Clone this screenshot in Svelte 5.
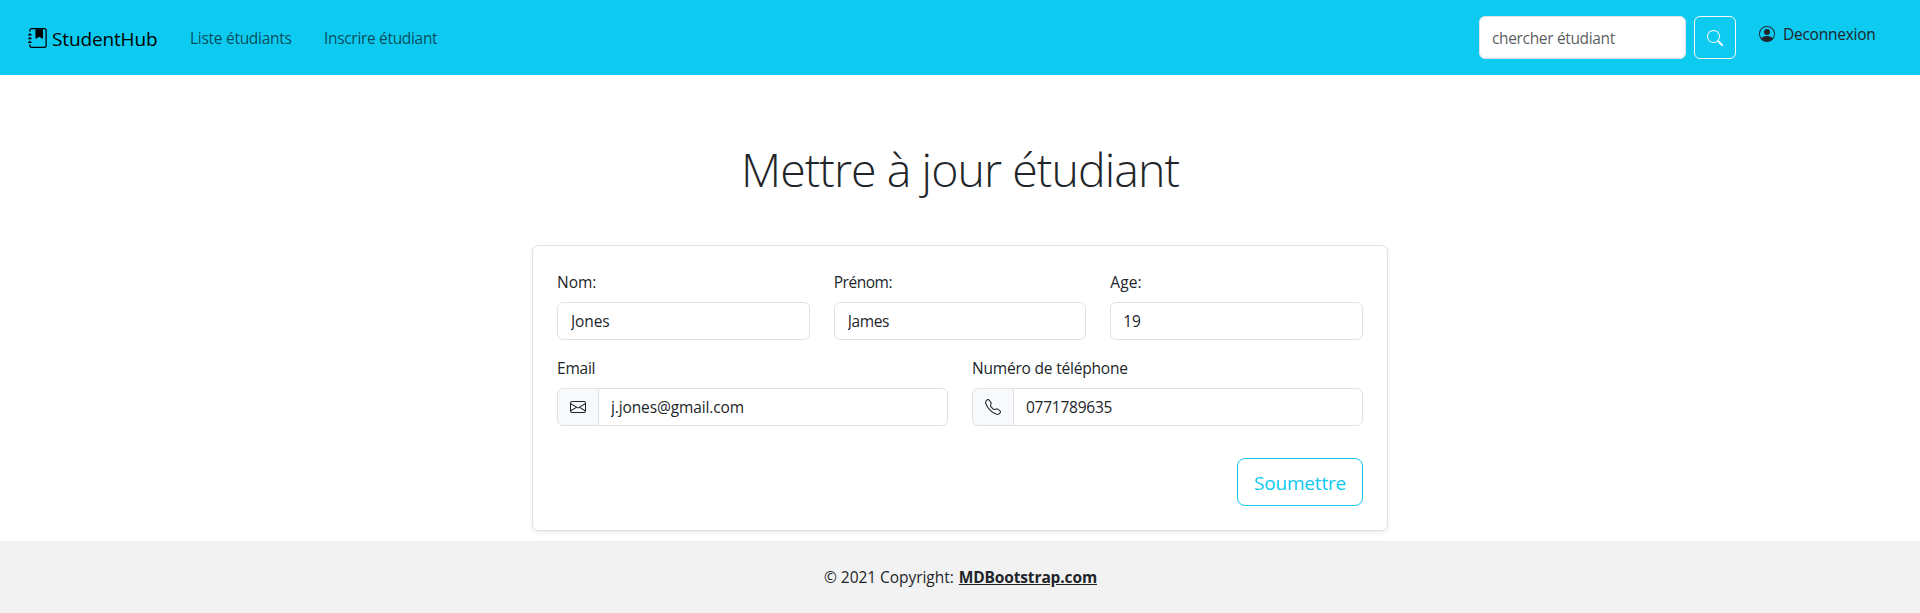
<script>
  const identity = [
    { id: 'nom', label: 'Nom:', value: 'Jones' },
    { id: 'prenom', label: 'Prénom:', value: 'James' },
    { id: 'age', label: 'Age:', value: '19' }
  ];
</script>

<nav class="navbar">
  <a class="brand" href="#home">
    <svg class="book" width="20" height="20" viewBox="0 0 16 16" fill="currentColor">
      <path fill-rule="evenodd" d="M6 8V1h1v6.117L8.743 6.07a.5.5 0 0 1 .514 0L11 7.117V1h1v7a.5.5 0 0 1-.757.429L9 7.083 6.757 8.43A.5.5 0 0 1 6 8z" />
      <path d="M6.3 1h5.4v7L9 6.4 6.3 8z" />
      <path d="M3 0h10a2 2 0 0 1 2 2v12a2 2 0 0 1-2 2H3a2 2 0 0 1-2-2v-1h1v1a1 1 0 0 0 1 1h10a1 1 0 0 0 1-1V2a1 1 0 0 0-1-1H3a1 1 0 0 0-1 1v1H1V2a2 2 0 0 1 2-2z" />
      <path d="M1 5v-.5a.5.5 0 0 1 1 0V5h.5a.5.5 0 0 1 0 1h-2a.5.5 0 0 1 0-1H1zm0 3v-.5a.5.5 0 0 1 1 0V8h.5a.5.5 0 0 1 0 1h-2a.5.5 0 0 1 0-1H1zm0 3v-.5a.5.5 0 0 1 1 0v.5h.5a.5.5 0 0 1 0 1h-2a.5.5 0 0 1 0-1H1z" />
    </svg>
    <span>StudentHub</span>
  </a>
  <a class="link list" href="#liste">Liste étudiants</a>
  <a class="link enrol" href="#inscrire">Inscrire étudiant</a>

  <form class="search">
    <input type="search" placeholder="chercher étudiant" />
    <button type="button" aria-label="chercher">
      <svg width="16" height="16" viewBox="0 0 16 16" fill="currentColor">
        <path d="M11.742 10.344a6.5 6.5 0 1 0-1.397 1.398h-.001c.03.04.062.078.098.115l3.85 3.85a1 1 0 0 0 1.415-1.414l-3.85-3.85a1.007 1.007 0 0 0-.115-.1zM12 6.5a5.5 5.5 0 1 1-11 0 5.5 5.5 0 0 1 11 0z" />
      </svg>
    </button>
  </form>
  <a class="logout" href="#logout">
    <svg width="16" height="16" viewBox="0 0 16 16" fill="currentColor">
      <path d="M11 6a3 3 0 1 1-6 0 3 3 0 0 1 6 0z" />
      <path fill-rule="evenodd" d="M0 8a8 8 0 1 1 16 0A8 8 0 0 1 0 8zm8-7a7 7 0 0 0-5.468 11.37C3.242 11.226 4.805 10 8 10s4.757 1.225 5.468 2.37A7 7 0 0 0 8 1z" />
    </svg>
    <span>Deconnexion</span>
  </a>
</nav>

<main>
  <h1>Mettre à jour étudiant</h1>
  <form class="card">
    <div class="row three">
      {#each identity as field}
        <div class="field {field.id}">
          <label for={field.id}>{field.label}</label>
          <input id={field.id} type="text" value={field.value} />
        </div>
      {/each}
    </div>
    <div class="row two">
      <div class="field email">
        <label for="email">Email</label>
        <div class="group">
          <span class="addon">
            <svg width="16" height="16" viewBox="0 0 16 16" fill="currentColor">
              <path d="M0 4a2 2 0 0 1 2-2h12a2 2 0 0 1 2 2v8a2 2 0 0 1-2 2H2a2 2 0 0 1-2-2V4zm2-1a1 1 0 0 0-1 1v.217l7 4.2 7-4.2V4a1 1 0 0 0-1-1H2zm13 2.383-4.708 2.825L15 11.105V5.383zm-.034 6.876-5.64-3.471L8 9.583l-1.326-.795-5.64 3.47A1 1 0 0 0 2 13h12a1 1 0 0 0 .966-.741zM1 11.105l4.708-2.897L1 5.383v5.722z" />
            </svg>
          </span>
          <input id="email" type="text" value="j.jones@gmail.com" />
        </div>
      </div>
      <div class="field tel">
        <label for="tel">Numéro de téléphone</label>
        <div class="group">
          <span class="addon">
            <svg width="16" height="16" viewBox="0 0 16 16" fill="currentColor">
              <path d="M3.654 1.328a.678.678 0 0 0-1.015-.063L1.605 2.3c-.483.484-.661 1.169-.45 1.77a17.568 17.568 0 0 0 4.168 6.608 17.569 17.569 0 0 0 6.608 4.168c.601.211 1.286.033 1.77-.45l1.034-1.034a.678.678 0 0 0-.063-1.015l-2.307-1.794a.678.678 0 0 0-.58-.122l-2.19.547a1.745 1.745 0 0 1-1.657-.459L5.482 8.062a1.745 1.745 0 0 1-.46-1.657l.548-2.19a.678.678 0 0 0-.122-.58L3.654 1.328zM1.884.511a1.745 1.745 0 0 1 2.612.163L6.29 2.98c.329.423.445.974.315 1.494l-.547 2.19a.678.678 0 0 0 .178.643l2.457 2.457a.678.678 0 0 0 .644.178l2.189-.547a1.745 1.745 0 0 1 1.494.315l2.306 1.794c.829.645.905 1.87.163 2.611l-1.034 1.034c-.74.74-1.846 1.065-2.877.702a18.634 18.634 0 0 1-7.01-4.42 18.634 18.634 0 0 1-4.42-7.009c-.362-1.03-.037-2.137.703-2.877L1.885.511z" />
            </svg>
          </span>
          <input id="tel" type="text" value="0771789635" />
        </div>
      </div>
    </div>
    <button class="submit" type="button">Soumettre</button>
  </form>
</main>

<footer>
  <span class="copy">© 2021 Copyright:</span>
  <a href="#mdb">MDBootstrap.com</a>
</footer>

<style>
  :global(body) {
    margin: 0;
    background: #fff;
    color: #212529;
    font: 400 15.5px/24px "Open Sans", "Noto Sans", sans-serif;
    overflow: hidden;
  }
  :global(*) { box-sizing: border-box; }
  a { color: inherit; text-decoration: none; }
  svg { display: block; flex: none; }

  .navbar {
    display: flex;
    align-items: center;
    height: 75px;
    padding: 0 44px 0 28px;
    background: #0dcaf0;
  }
  .brand {
    display: flex;
    align-items: center;
    gap: 4px;
    width: 162px;
    color: #000;
    font-size: 19px;
    letter-spacing: -0.14px;
    line-height: 30px;
  }
  .brand span { padding-top: 2px; }
  .link { padding-top: 1px; color: rgba(0, 0, 0, 0.65); }
  .list { width: 134px; letter-spacing: -0.28px; }
  .enrol { letter-spacing: -0.32px; }
  .search {
    display: flex;
    gap: 8px;
    height: 43px;
    margin-left: auto;
  }
  input {
    display: block;
    width: 100%;
    min-width: 0;
    height: 38px;
    margin: 0;
    padding: 0 12px;
    border: 1px solid #dee2e6;
    border-radius: 6px;
    background: #fff;
    color: #212529;
    font: inherit;
    letter-spacing: inherit;
    outline: none;
    appearance: none;
  }
  .search input {
    width: 207px;
    height: 43px;
    padding-top: 1px;
    letter-spacing: -0.34px;
  }
  input::placeholder { color: rgba(33, 37, 41, 0.75); opacity: 1; }
  .search button {
    display: grid;
    place-items: center;
    width: 42px;
    padding: 0;
    border: 1px solid #f8f9fa;
    border-radius: 6px;
    background: transparent;
    color: #f8f9fa;
  }
  .logout {
    display: flex;
    align-items: center;
    gap: 8px;
    width: 117px;
    margin: 0 0 7px 23px;
    letter-spacing: -0.25px;
  }

  main { width: 856px; margin: 0 auto; }
  h1 {
    margin: 0;
    padding: 65px 0 47px;
    font-size: 46.5px;
    font-weight: 300;
    line-height: 58px;
    letter-spacing: -0.95px;
    text-align: center;
  }
  .card {
    display: flex;
    flex-direction: column;
    height: 286px;
    padding: 24px;
    border: 1px solid #dee2e6;
    border-radius: 6px;
    background: #fff;
    box-shadow: 0 2px 4px rgba(0, 0, 0, 0.075);
  }
  .row { display: grid; column-gap: 24px; margin-bottom: 16px; }
  .three { grid-template-columns: repeat(3, 1fr); }
  .two { grid-template-columns: repeat(2, 1fr); margin-bottom: 32px; }
  label { display: block; height: 24px; margin-bottom: 8px; }
  .nom label { letter-spacing: 0; }
  .nom input { padding-left: 13px; letter-spacing: -0.1px; }
  .prenom label { letter-spacing: -0.45px; }
  .prenom input { padding-left: 13px; letter-spacing: -0.35px; }
  .age label { letter-spacing: 0.1px; }
  .age input { letter-spacing: -0.3px; }
  .email label { letter-spacing: -0.22px; }
  .email input { letter-spacing: -0.13px; }
  .tel label { letter-spacing: -0.2px; }
  .tel input { letter-spacing: -0.25px; }
  .group { display: flex; }
  .addon {
    display: grid;
    flex: none;
    place-items: center;
    width: 42px;
    height: 38px;
    margin-right: -1px;
    border: 1px solid #dee2e6;
    border-radius: 6px 0 0 6px;
    background: #f8f9fa;
  }
  .group input { border-radius: 0 6px 6px 0; }
  .submit {
    align-self: flex-end;
    width: 126px;
    height: 48px;
    padding: 2px 0 0;
    border: 1px solid #0dcaf0;
    border-radius: 8px;
    background: transparent;
    color: #0dcaf0;
    font: inherit;
    font-size: 19px;
    letter-spacing: -0.17px;
  }

  footer {
    display: flex;
    justify-content: center;
    gap: 5px;
    height: 72px;
    margin-top: 10px;
    padding: 24px 0 0 1px;
    background: #f2f2f2;
  }
  .copy { letter-spacing: -0.05px; }
  footer a {
    font-weight: 700;
    letter-spacing: -0.13px;
    text-decoration: underline;
  }
</style>
